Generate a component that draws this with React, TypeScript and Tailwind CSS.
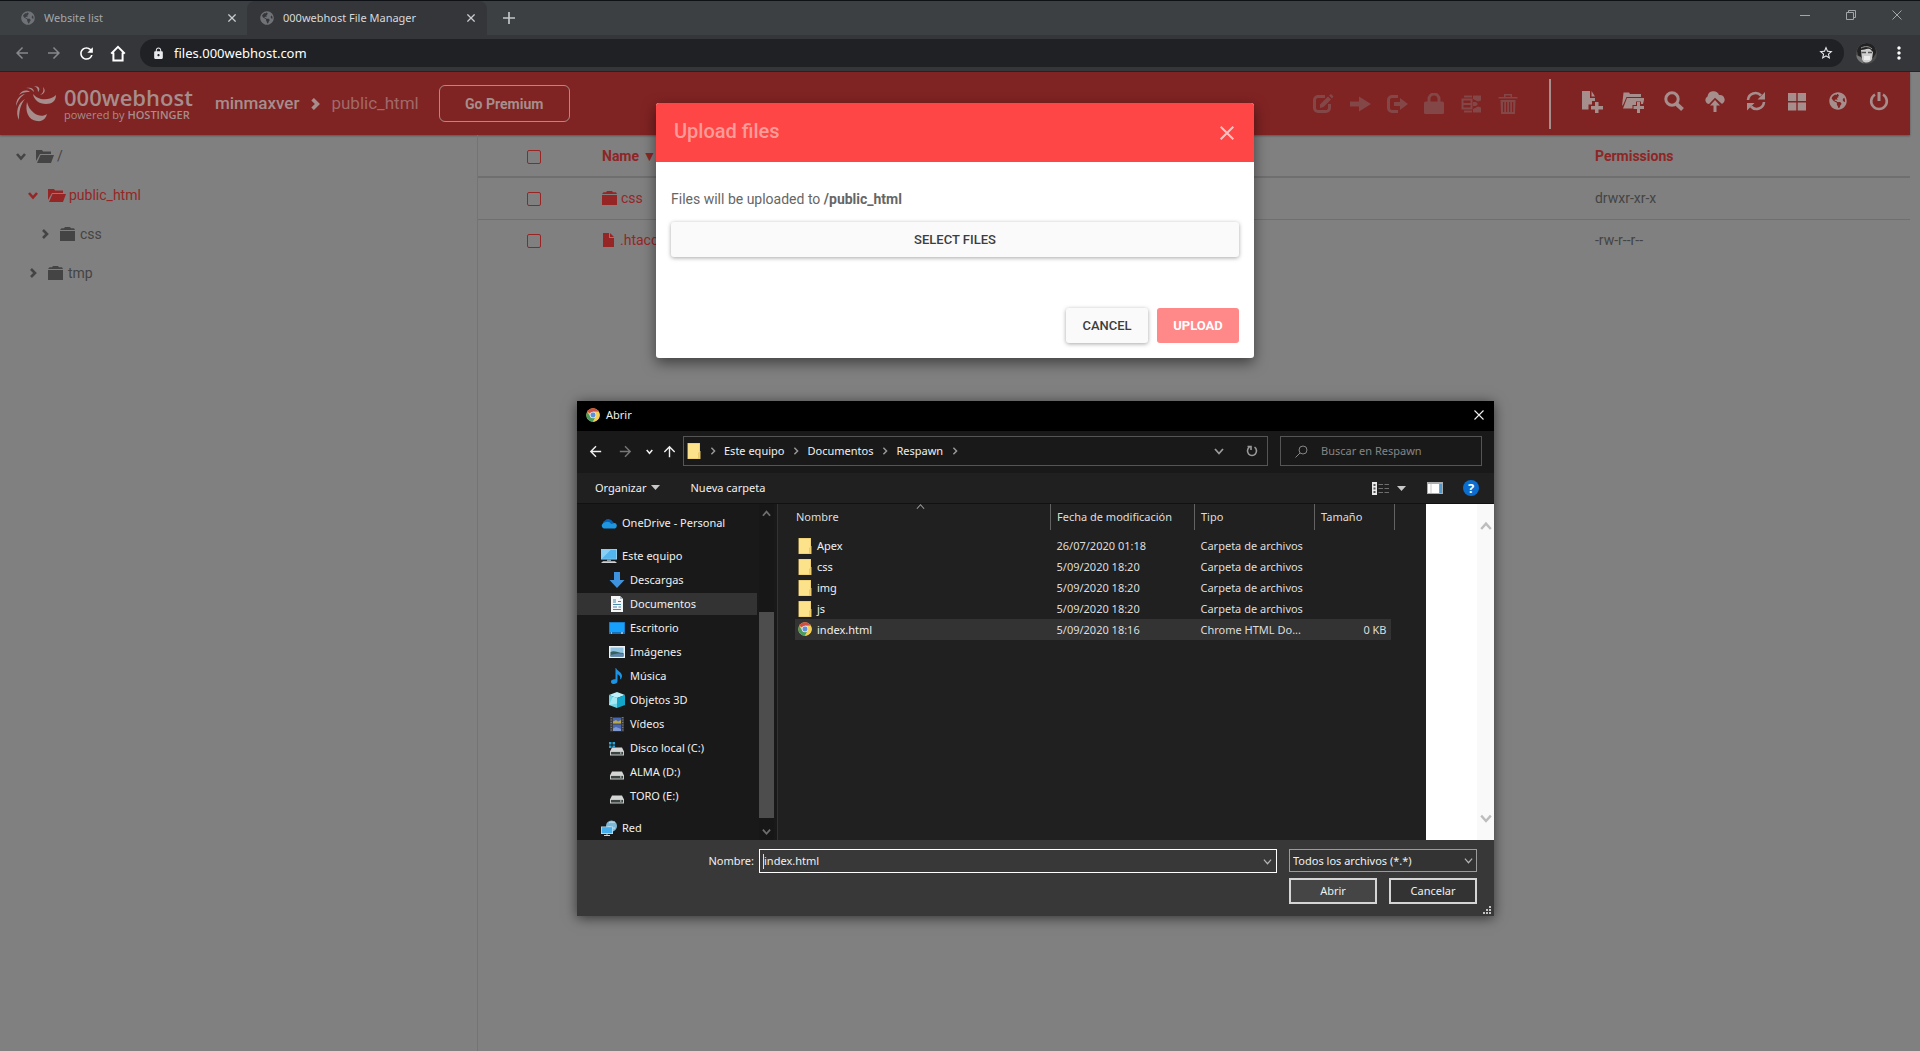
import type { ReactNode } from "react";
import { FaGlobeAmericas } from "react-icons/fa";
import { MdArrowBack, MdArrowForward, MdLock, MdMoreVert, MdRefresh, MdStarBorder } from "react-icons/md";

const SEGOE = "font-['Noto_Sans','Open_Sans',sans-serif]";
const ROBOTO = "font-['Roboto',sans-serif]";

/* ---------- shared glyphs ---------- */

function Chevron({ dir, size = 10, width = 2 }: { dir: "up" | "down" | "right"; size?: number; width?: number }) {
  const d = { up: "M1 7.5 5 3l4 4.5", down: "M1 3l4 4.5L9 3", right: "M3 1l4 4-4 4" }[dir];
  return (
    <svg width={size} height={size} viewBox="0 0 10 10" fill="none" stroke="currentColor" strokeWidth={width} className="shrink-0">
      <path d={d} />
    </svg>
  );
}

function Cross({ size = 10, width = 1 }: { size?: number; width?: number }) {
  return (
    <svg width={size} height={size} viewBox="0 0 10 10" fill="none" stroke="currentColor" strokeWidth={width} className="shrink-0">
      <path d="M.5.5l9 9M9.5.5l-9 9" />
    </svg>
  );
}

function ChromeLogo() {
  return (
    <svg width="14" height="14" viewBox="0 0 48 48" className="shrink-0">
      <circle cx="24" cy="24" r="23" fill="#f6cf58" />
      <path d="M24 24 4.1 12.5A23 23 0 0 1 43.9 12.5L24 13z" fill="#cf4f46" />
      <path d="M24 24 14.4 29.5 4.1 12.5A23 23 0 0 0 24 47L33.5 29.5z" fill="#4b9a5e" />
      <path d="M24 13H44.2A23 23 0 0 1 24 47L33.8 29.5z" fill="#f6cf58" />
      <circle cx="24" cy="24" r="11" fill="#dfe5ef" />
      <circle cx="24" cy="24" r="8.5" fill="#5b8edb" />
    </svg>
  );
}

function FolderTile() {
  return (
    <svg width="14" height="16" viewBox="0 0 14 16" className="shrink-0">
      <path d="M.5 0H13v8h.5v8H.5z" fill="#e3c466" />
      <path d="M1 .5h11.5V9L11 10v5.5H1z" fill="#fde28c" />
      <path d="M11.5 10 13 9v6.5h-1.5z" fill="#f3d06d" />
    </svg>
  );
}

/* ---------- browser chrome ---------- */

function Tab({ title, active }: { title: string; active?: boolean }) {
  return (
    <div
      className={
        active
          ? "flex w-60 items-center rounded-t-lg bg-[#35363a] pl-[13px] pr-[10px] text-[#d8d9da]"
          : "flex w-[247px] items-center pl-[21px] pr-[9px] text-[#a4a7aa]"
      }
    >
      <FaGlobeAmericas size={14} className="mr-[9px] shrink-0 text-[#6f7276]" />
      <span className="flex-1 truncate">{title}</span>
      <button aria-label={"Close " + title} className="p-0.5 text-[#c9cbcd]">
        <Cross size={8} width={1.6} />
      </button>
    </div>
  );
}

function BrowserBar() {
  return (
    <header className={SEGOE}>
      <div className="flex h-[35px] border-t border-[#0e1116] bg-[#3c4043] text-[11px]">
        <Tab title="Website list" />
        <Tab title="000webhost File Manager" active />
        <button aria-label="New tab" className="ml-4 text-[#c3c5c7]">
          <svg width="12" height="12" viewBox="0 0 12 12" stroke="currentColor" strokeWidth="1.7">
            <path d="M6 0v12M0 6h12" />
          </svg>
        </button>
        <div className="ml-auto flex items-start gap-9 pt-[9px] pr-[18px] text-[#a3a6a8]">
          <button aria-label="Minimize">
            <svg width="10" height="10" viewBox="0 0 10 10" stroke="currentColor"><path d="M0 5.5h10" /></svg>
          </button>
          <button aria-label="Restore">
            <svg width="10" height="10" viewBox="0 0 10 10" fill="none" stroke="currentColor"><path d="M.5 2.5h7v7h-7zM2.5 2.5v-2h7v7h-2" /></svg>
          </button>
          <button aria-label="Close window"><Cross /></button>
        </div>
      </div>
      <div className="flex h-9 items-center bg-[#35363a] pl-[13px] pr-[11px]">
        <nav className="flex items-center gap-[14px] text-white">
          <button aria-label="Back" className="text-[#86888a]"><MdArrowBack size={18} /></button>
          <button aria-label="Forward" className="text-[#86888a]"><MdArrowForward size={18} /></button>
          <button aria-label="Reload"><MdRefresh size={19} /></button>
          <button aria-label="Home">
            <svg width="16" height="17" viewBox="0 0 16 17" fill="none" stroke="currentColor" strokeWidth="2">
              <path d="M1.2 8.6 8 1.8l6.8 6.8M3.4 7.5v8h9.2v-8" />
            </svg>
          </button>
        </nav>
        <div className="ml-[14px] flex h-7 flex-1 items-center rounded-full bg-[#202124] pl-3 pr-[10px] text-[#e8eaed]">
          <MdLock size={13} />
          <input aria-label="Address" defaultValue="files.000webhost.com" className="ml-[9px] flex-1 bg-transparent pt-0.5 text-[13px] text-white outline-none" />
          <button aria-label="Bookmark"><MdStarBorder size={16} /></button>
        </div>
        <button aria-label="Profile" className="ml-3">
          <svg width="21" height="21" viewBox="0 0 21 21">
            <defs><clipPath id="av"><circle cx="10.5" cy="10.5" r="10.5" /></clipPath></defs>
            <g clipPath="url(#av)">
              <path d="M0 0h21v21H0z" fill="#4c4c4c" />
              <path d="M1 8C2 2 7 0 12 0s8 4 8 10l-3 5H3z" fill="#222" />
              <path d="M5 7c4 0 5-2 9-1l3 3-1 7c-1 4-8 5-10 1z" fill="#cfcfcf" />
              <path d="M5.500 9.500h4.500M12 9.500h4" stroke="#555" strokeWidth="1.400" />
              <path d="M0 12l5 2 3 7H0z" fill="#777" />
              <path d="M8 13h6v4H8z" fill="#ececec" />
              <path d="M5 5c4-2 8-2 11 1" stroke="#999" strokeWidth="1" fill="none" />
            </g>
          </svg>
        </button>
        <button aria-label="Menu" className="ml-3 text-white"><MdMoreVert size={20} /></button>
      </div>
    </header>
  );
}

/* ---------- file manager header ---------- */

function HostLogo() {
  return (
    <svg width="42" height="36" viewBox="0 0 42 36" fill="currentColor" className="shrink-0">
      <path d="M18 8C19 14 24 18 31 18c6 0 10-3 10-9-4 4-10 5-15 4-4-1-6-3-8-5z" />
      <path d="M12 16c-2 9 1 18 10 19 6 1 9-3 10-7-4 3-9 2-13-1-4-3-6-7-7-11z" />
      <path d="M10 13C3 17 0 26 4 34 4 26 5 19 10 13z" />
      <path d="M10 8C4 9 1 14 1 20 3 15 5 11 10 8z" />
      <path d="M15 6C11 3 6 5 4 9c4-3 7-3 11-3z" />
      <path d="M19 6c0-4-4-5-8-4 4 0 6 2 8 4z" />
      <path d="M23 6c3-3 1-6-4-6 3 1 4 3 4 6z" />
      <path d="M25 9c5-1 6-5 3-8 1 4 0 6-3 8z" />
    </svg>
  );
}

function Glyph({ children }: { children: ReactNode }) {
  return (
    <svg width="22" height="22" viewBox="0 0 22 22" fill="currentColor" className="shrink-0">
      {children}
    </svg>
  );
}

const fileActions: { label: string; icon: ReactNode }[] = [
  {
    label: "Edit",
    icon: (
      <>
        <path d="M13 3.500H6A3.500 3.500 0 0 0 2.500 7v8A3.500 3.500 0 0 0 6 18.500h8a3.500 3.500 0 0 0 3.500-3.500v-4" fill="none" stroke="currentColor" strokeWidth="3" />
        <path d="M8 15V11.500L16 3.500 19 6.500 11.500 14zM17 2.500l2-1.500 2.500 2.500-1.500 2z" />
      </>
    ),
  },
  { label: "Move", icon: <path d="M1 8.500h9V3.500L22 11l-12 7.500v-5H1z" /> },
  {
    label: "Copy",
    icon: (
      <>
        <path d="M12 3.500H6A3.500 3.500 0 0 0 2.500 7v8A3.500 3.500 0 0 0 6 18.500h6" fill="none" stroke="currentColor" strokeWidth="3" />
        <path d="M8 9h6V5l8 6-8 6v-4H8z" />
      </>
    ),
  },
  {
    label: "Permissions",
    icon: (
      <>
        <path d="M6 10V6a5 5 0 0 1 10 0v4" fill="none" stroke="currentColor" strokeWidth="3" />
        <rect x="1" y="8.500" width="20" height="12.500" rx="1.500" />
      </>
    ),
  },
  {
    label: "Archive",
    icon: (
      <>
        <path d="M4 3.500h8M4 18.500h8M2.500 6.500h9v9h-9zM2 11h9" fill="none" stroke="currentColor" strokeWidth="2" />
        <path d="M13 2.500h8v5l-3 1-5-2.500zM13 9h3l2 2-2 2h-3zM13 16l5-2.500 3 1v5h-8z" />
      </>
    ),
  },
  {
    label: "Delete",
    icon: (
      <>
        <path d="M1.500 4h19v1.500h-19zM7 4V1h8v3h-1.500V2.500h-5V4z" />
        <path d="M3.500 7h15L18 21H4zM6 9v10h1.200V9zm3 0v10h1.200V9zm3 0v10h1.200V9zm3 0v10h1.200V9z" fillRule="evenodd" />
      </>
    ),
  },
];

const pageActions: { label: string; icon: ReactNode }[] = [
  { label: "New file", icon: <path d="M1 0h8v7h5v3h-3v3.500H7.500v5H1zM10.500 0 14 5.500h-3.500zM14 11h3.500v4H22v3.500h-4.500V22H14v-3.500h-4V15h4z" /> },
  { label: "New folder", icon: <path d="M0 15 1.500 1.500H7L8 3h11v3H4.500L1.500 13zM5 7h17.500l-1.500 6H19v-2.500h-5V14h-3.500v3.500H1zM15 11h3v4h4v3h-4v4h-3v-4h-3.500v-3H15z" /> },
  {
    label: "Search",
    icon: (
      <>
        <circle cx="9" cy="8" r="6.200" fill="none" stroke="currentColor" strokeWidth="3" />
        <path d="m13 12.500 6.500 6" stroke="currentColor" strokeWidth="4" />
      </>
    ),
  },
  { label: "Upload", icon: <path d="M5 13A4 4 0 0 1 3.500 5.500 6 6 0 0 1 15 4a4.800 4.800 0 0 1 3 9L11 6.800zM11 9l5 5.500h-3.500V21h-3v-6.500H6z" /> },
  {
    label: "Refresh",
    icon: (
      <>
        <path d="M3 9A7.500 7.500 0 0 1 16 4.500M19 11a7.500 7.500 0 0 1-13 4.500" fill="none" stroke="currentColor" strokeWidth="2.600" />
        <path d="M20 1v7.500h-7.500zM2 19.500V12h7.500z" />
      </>
    ),
  },
  { label: "Grid view", icon: <path d="M2 2h8.300v8H2zM11.700 2H20v8h-8.300zM2 11.500h8.300v8H2zM11.700 11.500H20v8h-8.300z" /> },
  { label: "Language", icon: <FaGlobeAmericas size={18} x={2} y={1} /> },
  {
    label: "Log out",
    icon: (
      <>
        <path d="M7 3.500a7.800 7.800 0 1 0 8 0" fill="none" stroke="currentColor" strokeWidth="2.600" />
        <path d="M9.500 1h3v9h-3z" />
      </>
    ),
  },
];

function SiteHeader() {
  return (
    <div className="flex h-[63px] items-center bg-[#802323] pl-[15px] pr-5 text-[#a58e8c] shadow-[0_1px_2px_rgba(0,0,0,0.35)]">
      <a href="#home" className="flex items-center gap-[7px] font-['Open_Sans',sans-serif]">
        <HostLogo />
        <span className="flex flex-col">
          <span className="text-[22px] leading-[22px] font-semibold">000webhost</span>
          <span className="text-[11px] leading-[14px]">powered by <span className="font-semibold">HOSTINGER</span></span>
        </span>
      </a>
      <nav className="ml-[22px] flex items-center gap-[10px] text-[17px] font-medium">
        <a href="#root">minmaxver</a>
        <Chevron dir="right" size={12} width={3} />
        <a href="#public_html" className="font-normal text-[#a06a69]">public_html</a>
      </nav>
      <button className="ml-5 h-[37px] w-[131px] rounded-md border border-[#a58e8c] text-sm font-bold">Go Premium</button>
      <div className="ml-auto flex items-center gap-[15px] text-[#844748]">
        {fileActions.map((a) => (
          <button key={a.label} aria-label={a.label} disabled><Glyph>{a.icon}</Glyph></button>
        ))}
      </div>
      <div className="mx-[30px] h-[50px] w-0.5 bg-[#a58e8c]" />
      <div className="flex items-center gap-[19px] pb-1">
        {pageActions.map((a) => (
          <button key={a.label} aria-label={a.label}><Glyph>{a.icon}</Glyph></button>
        ))}
      </div>
    </div>
  );
}

/* ---------- tree and listing ---------- */

function OpenFolder() {
  return (
    <svg width="18" height="14" viewBox="0 0 18 14" fill="currentColor" className="shrink-0">
      <path d="M0 12V1h6l1 1.500h8V5H4zM4.500 6H18l-3 8H1z" />
    </svg>
  );
}

function ClosedFolder() {
  return (
    <svg width="15" height="14" viewBox="0 0 15 14" fill="currentColor" className="shrink-0">
      <path d="M0 3 1.500 1.200H4L5 0h5l1 1.200h3L15 3zM0 4h15v10H0z" />
    </svg>
  );
}

const tree = [
  { name: "/", open: true, className: "pl-4" },
  { name: "public_html", open: true, className: "pl-7 text-[#962626]" },
  { name: "css", open: false, className: "pl-10" },
  { name: "tmp", open: false, className: "pl-7" },
];

function Tree() {
  return (
    <aside className="w-[478px] shrink-0 border-r border-[#747474]">
      <ul className="pt-px">
        {tree.map((n) => (
          <li key={n.name} className={"flex h-[39px] items-center " + n.className}>
            <Chevron dir={n.open ? "down" : "right"} size={10} width={2.6} />
            <a href={"#" + n.name} className={n.open ? "ml-[10px] flex items-center gap-[3px]" : "ml-[10px] flex items-center gap-[5px]"}>
              {n.open ? <OpenFolder /> : <ClosedFolder />}
              {n.name}
            </a>
          </li>
        ))}
      </ul>
    </aside>
  );
}

const box = "mt-0.5 block size-[14px] appearance-none rounded-[2px] border border-[#992424]";

function Listing() {
  return (
    <div className="flex-1">
      <table className="w-full table-fixed text-left">
        <colgroup>
          <col className="w-[124px]" />
          <col />
          <col className="w-[22%]" />
        </colgroup>
        <thead className="text-[#8e2626]">
          <tr className="h-[42px] border-b-2 border-[#6f6f6f]">
            <th className="pl-[49px]"><input type="checkbox" aria-label="Select all" className={box} /></th>
            <th className="font-bold">Name ▼</th>
            <th className="font-bold">Permissions</th>
          </tr>
        </thead>
        <tbody>
          <tr className="h-[42px] border-b border-[#6f6f6f]">
            <td className="pl-[49px]"><input type="checkbox" aria-label="css" className={box} /></td>
            <td><a href="#css" className="flex items-center gap-1 text-[#962626]"><ClosedFolder />css</a></td>
            <td>drwxr-xr-x</td>
          </tr>
          <tr className="h-[42px]">
            <td className="pl-[49px]"><input type="checkbox" aria-label=".htaccess" className={box} /></td>
            <td>
              <a href="#htaccess" className="flex items-center gap-[6px] text-[#962626]">
                <svg width="12" height="14" viewBox="0 0 12 14" fill="currentColor"><path d="M1 0h6v5h5v9H1zM8 0l4 4H8z" /></svg>
                .htaccess
              </a>
            </td>
            <td>-rw-r--r--</td>
          </tr>
        </tbody>
      </table>
    </div>
  );
}

function UploadModal() {
  const raised = "h-[35px] rounded-[3px] bg-[#fafafa] pt-0.5 text-[#3d3d3d] shadow-[0_1px_4px_rgba(0,0,0,0.35)]";
  return (
    <section role="dialog" aria-label="Upload files" className="absolute inset-x-0 top-[31px] mx-auto w-[598px] overflow-hidden rounded-[3px] bg-white text-[#666] shadow-[0_5px_14px_rgba(0,0,0,0.5)]">
      <div className="flex h-[59px] items-center justify-between bg-[#ff4646] pl-[18px] pr-5 text-[#ff9c98]">
        <h2 className="pb-1 text-xl font-medium">Upload files</h2>
        <button aria-label="Close" className="text-[#ffc4c2]"><Cross size={14} width={1.4} /></button>
      </div>
      <div className="px-[15px] pt-[27px] pb-[15px]">
        <p className="leading-5">Files will be uploaded to <strong className="font-bold">/public_html</strong></p>
        <button className={"mt-[13px] w-full text-[13px] font-medium " + raised}>SELECT FILES</button>
        <div className="mt-[51px] flex justify-end gap-[9px] text-[13px] font-medium">
          <button className={"w-[82px] " + raised}>CANCEL</button>
          <button disabled className="h-[35px] w-[82px] rounded-[3px] bg-[#ff8889] pt-0.5 font-bold text-white">UPLOAD</button>
        </div>
      </div>
    </section>
  );
}

/* ---------- open-file window ---------- */

function Icon16({ children }: { children: ReactNode }) {
  return <svg width="16" height="16" viewBox="0 0 16 16" className="shrink-0">{children}</svg>;
}

function DriveBody() {
  return (
    <>
      <path d="M3 7.500h10l2 4H1z" fill="#d4d6d6" />
      <path d="M1 11h14v4.500H1z" fill="#c7caca" />
      <path d="M2 12h12v2.500H2z" fill="#3c4442" />
      <path d="M11 13h1.500" stroke="#d9f5e5" />
    </>
  );
}

const places: { name: string; className: string; icon: ReactNode }[] = [
  {
    name: "OneDrive - Personal",
    className: "mb-[9px] pl-6",
    icon: (
      <>
        <path d="M4 12a3.500 3.500 0 0 1 0-6.500A5 5 0 0 1 12 7l4 4z" fill="#0a5fb0" />
        <path d="M1 9.500C4 6 9 6 10 9l4-1a3 3 0 0 1 0 5.500H3A3 3 0 0 1 1 9.500z" fill="#1f96e0" />
      </>
    ),
  },
  {
    name: "Este equipo",
    className: "pl-6",
    icon: (
      <>
        <path d="M0 1h16v10.500H0z" fill="#9fd4f3" />
        <path d="M.8 1.800h14.400v9H.8z" fill="#53b5ee" />
        <path d="M.8 10.800V1.800h9z" fill="#8ad0f6" />
        <path d="M6 11.500h4v1.500H6z" fill="#8f9aa0" />
        <path d="M0 15l2-1.800h12L16 15z" fill="#cfd3d5" />
      </>
    ),
  },
  { name: "Descargas", className: "pl-8", icon: <path d="M5 0h6v8h4.500L8 16 .5 8H5z" fill="#3f92de" /> },
  {
    name: "Documentos",
    className: "pl-8 bg-[#333333]",
    icon: (
      <>
        <path d="M2 0h9l3 3v13H2z" fill="#f4f6f8" />
        <path d="M11 0v3h3z" fill="#aeb6bd" />
        <path d="M4 4h3M4 6h3M4 8.500h8M4 11h4M9.500 11H12M4 13.500h8M9 5.500h3" stroke="#4b86ab" strokeWidth="1.200" />
      </>
    ),
  },
  {
    name: "Escritorio",
    className: "pl-8",
    icon: (
      <>
        <path d="M0 2h16v12H0z" fill="#1a6fb5" />
        <path d="M.7 2.700h14.600V12H.7z" fill="#16a0fb" />
        <path d="M2 13h1M12 13h2" stroke="#fff" />
      </>
    ),
  },
  {
    name: "Imágenes",
    className: "pl-8",
    icon: (
      <>
        <path d="M0 2h16v12H0z" fill="#eef1f3" />
        <path d="M1.500 3.500h13v9h-13z" fill="#8fc3e0" />
        <path d="M1.500 8c4-2 7 1 13 1v3.500h-13z" fill="#36605b" />
        <path d="M1.500 11c5-1 8-2 13-1v2.500h-13z" fill="#5c86b0" />
      </>
    ),
  },
  { name: "Música", className: "pl-8", icon: <path d="M7 0c1 3 6 4 6 8 0 2-1 3-2 3.500.8-3-.5-4.500-2.500-5.200V13c0 2-2 3-4 3S2 15 2 13.500 4 11 6.500 11.300V0z" fill="#1c94e6" /> },
  {
    name: "Objetos 3D",
    className: "pl-8",
    icon: (
      <>
        <path d="M8 0l8 3-8 3-8-3z" fill="#bdf0f8" />
        <path d="M0 3l8 3v10l-8-3z" fill="#6fd6e8" />
        <path d="M16 3 8 6v10l8-3z" fill="#12a6cb" />
        <path d="M4 4.500 8 6v5.500L0 13z" fill="#a4e8f3" />
      </>
    ),
  },
  {
    name: "Vídeos",
    className: "pl-8",
    icon: (
      <>
        <path d="M1 1h14v14.500H1z" fill="#3c3c40" />
        <path d="M2.200 1v14M13.800 1v14" stroke="#8d8d92" strokeDasharray="1 1.500" />
        <path d="M4 2h8v5.500H4zM4 8.500h8V15H4z" fill="#4668b4" />
        <path d="M4 5.500 7 4l2 1.500 3-1.500v3.500H4z" fill="#b9a64a" />
        <path d="M4 12.500 7 11l5 2v2H4z" fill="#7e97cf" />
      </>
    ),
  },
  {
    name: "Disco local (C:)",
    className: "pl-8",
    icon: (
      <>
        <DriveBody />
        <path d="M0 2h2.500v2.500H0zM3.500 2H6v2.500H3.500zM0 5.500h2.500V8H0zM3.500 5.500H6V8H3.500z" fill="#2ba3d4" />
      </>
    ),
  },
  { name: "ALMA (D:)", className: "pl-8", icon: <DriveBody /> },
  { name: "TORO (E:)", className: "mb-2 pl-8", icon: <DriveBody /> },
  {
    name: "Red",
    className: "pl-6",
    icon: (
      <>
        <circle cx="10.500" cy="6" r="5.500" fill="#7db9d6" />
        <path d="M8 3c2-2 4 0 6-1M7 7c3-1 4 2 7 1" stroke="#c9e6f2" fill="none" />
        <path d="M0 6.500h12V14H0z" fill="#bfe2f6" />
        <path d="M.8 7.200h10.400v6H.8z" fill="#46aeea" />
        <path d="M3 15.500h6M6 14v1.500" stroke="#cfd8dc" />
      </>
    ),
  },
];

const files = [
  { name: "Apex", date: "26/07/2020 01:18", type: "Carpeta de archivos", size: "" },
  { name: "css", date: "5/09/2020 18:20", type: "Carpeta de archivos", size: "" },
  { name: "img", date: "5/09/2020 18:20", type: "Carpeta de archivos", size: "" },
  { name: "js", date: "5/09/2020 18:20", type: "Carpeta de archivos", size: "" },
  { name: "index.html", date: "5/09/2020 18:16", type: "Chrome HTML Do...", size: "0 KB" },
];

function Crumb({ children }: { children?: ReactNode }) {
  return (
    <>
      <span className="flex w-[23px] justify-center text-[#9a9a9a]"><Chevron dir="right" size={8} width={1.8} /></span>
      {children && <button>{children}</button>}
    </>
  );
}

function Triangle() {
  return <svg width="9" height="5" viewBox="0 0 9 5" fill="currentColor"><path d="M0 0h9L4.500 5z" /></svg>;
}

function OpenDialog() {
  const heading = "border-r border-[#636363] pl-[6px] font-normal";
  return (
    <section role="dialog" aria-label="Abrir" className={"absolute top-[329px] left-[577px] w-[917px] bg-[#191919] text-[11px] text-[#f0f0f0] shadow-[0_2px_12px_rgba(0,0,0,0.6)] " + SEGOE}>
      <div className="flex h-[30px] items-center bg-black pr-[10px] pb-0.5 pl-[9px]">
        <ChromeLogo />
        <h2 className="ml-[6px] flex-1">Abrir</h2>
        <button aria-label="Cerrar"><Cross size={10} width={1.1} /></button>
      </div>

      <div className="flex h-[42px] items-center pr-3 pl-[10px] pb-0.5">
        <button aria-label="Atrás"><MdArrowBack size={17} /></button>
        <button aria-label="Adelante" className="ml-[13px] text-[#777]"><MdArrowForward size={17} /></button>
        <button aria-label="Recientes" className="ml-3"><Chevron dir="down" size={7} width={2.2} /></button>
        <button aria-label="Subir" className="ml-2"><MdArrowBack size={17} className="rotate-90" /></button>
        <div className="ml-[5px] flex h-[30px] flex-1 items-center border border-[#555] pl-[3px]">
          <FolderTile />
          <Crumb>Este equipo</Crumb>
          <Crumb>Documentos</Crumb>
          <Crumb>Respawn</Crumb>
          <Crumb />
          <button aria-label="Ubicaciones anteriores" className="ml-auto text-[#9a9a9a]"><Chevron dir="down" size={10} width={1.8} /></button>
          <button aria-label="Actualizar" className="mr-2 ml-[21px] text-[#9a9a9a]">
            <svg width="14" height="14" viewBox="0 0 14 14" fill="none" stroke="currentColor" strokeWidth="1.600">
              <path d="M9.500 3.200a4.500 4.500 0 1 1-5 0M2.500 2.500H6V6" />
            </svg>
          </button>
        </div>
        <label className="ml-3 flex h-[30px] w-[202px] items-center border border-[#555] pl-[14px] text-[#858585]">
          <svg width="13" height="13" viewBox="0 0 13 13" fill="none" stroke="currentColor"><circle cx="8" cy="5" r="4" /><path d="M5 8 .5 12.500" /></svg>
          <input placeholder="Buscar en Respawn" aria-label="Buscar en Respawn" className="ml-[13px] min-w-0 flex-1 bg-transparent outline-none placeholder:text-[#858585]" />
        </label>
      </div>

      <div className="flex h-[31px] items-center border-b border-[#111] bg-[#202020] pr-[15px] pl-[18px]">
        <button className="flex items-center gap-[5px]">Organizar <span className="text-[#c8c8c8]"><Triangle /></span></button>
        <button className="ml-[30px]">Nueva carpeta</button>
        <button aria-label="Cambiar vista" className="ml-auto flex items-center gap-2 text-[#c8c8c8]">
          <svg width="17" height="13" viewBox="0 0 17 13">
            <path d="M0 0h5v13H0z" fill="#e8e8e8" />
            <path d="M1.500 2h2v2h-2zM1.500 5.500h2v2h-2zM1.500 9h2v2h-2z" fill="#555" />
            <path d="M6.500 2.500H11m1.500 0H17M6.500 6.500H11m1.500 0H17M6.500 10.500H11m1.500 0H17" stroke="#6f6f6f" />
          </svg>
          <Triangle />
        </button>
        <button aria-label="Panel de vista previa" className="ml-[21px]">
          <svg width="16" height="12" viewBox="0 0 16 12">
            <path d="M0 0h16v12H0z" fill="#a9adb0" />
            <path d="M1 2h11v9H1z" fill="#fff" />
            <path d="M4 2v9" stroke="#c9c9c9" />
            <path d="M12.500 2H15v9h-2.500z" fill="#4d9bd0" />
          </svg>
        </button>
        <button aria-label="Ayuda" className="ml-5 size-4 rounded-full bg-[#0a6ed1] text-[13px] leading-4 font-bold text-white">?</button>
      </div>

      <div className="flex h-[336px]">
        <ul className="w-[180px] overflow-hidden pt-[7px]">
          {places.map((p) => (
            <li key={p.name} className={"flex h-6 items-center border-y border-[#191919] bg-clip-padding " + p.className}>
              <Icon16>{p.icon}</Icon16>
              <span className="ml-[5px] whitespace-nowrap">{p.name}</span>
            </li>
          ))}
        </ul>
        <div className="ml-0.5 flex w-[15px] flex-col items-center bg-[#171717] text-[#6e6e6e]">
          <span className="flex h-[108px] pt-[5px]"><Chevron dir="up" size={9} width={2} /></span>
          <span className="w-full flex-1 bg-[#4d4d4d]" />
          <span className="flex h-[22px] items-center pt-1"><Chevron dir="down" size={9} width={2} /></span>
        </div>
        <div className="relative ml-[3px] flex-1 border-l border-[#333] bg-[#202020]">
          <span className="absolute -top-0.5 left-[138px] text-[#9a9a9a]"><Chevron dir="up" size={9} width={1.2} /></span>
          <table className="ml-[17px] w-[600px] table-fixed text-left text-[#dedede]">
            <colgroup>
              <col />
              <col className="w-36" />
              <col className="w-[120px]" />
              <col className="w-20" />
            </colgroup>
            <thead>
              <tr className="h-[26px]">
                <th className="border-r border-[#636363] pl-px font-normal">Nombre</th>
                <th className={heading}>Fecha de modificación</th>
                <th className={heading}>Tipo</th>
                <th className={heading}>Tamaño</th>
              </tr>
              <tr className="h-[5px]" />
            </thead>
            <tbody>
              {files.map((f) => (
                <tr key={f.name} className={f.size ? "h-[21px] bg-[linear-gradient(to_right,#333_596px,transparent_596px)]" : "h-[21px]"}>
                  <td className="pl-[3px] text-[#f0f0f0]">
                    <span className="flex items-center gap-[5px]">{f.size ? <ChromeLogo /> : <FolderTile />}{f.name}</span>
                  </td>
                  <td className="pl-[6px]">{f.date}</td>
                  <td className="pl-[6px]">{f.type}</td>
                  <td className="pr-2 text-right">{f.size}</td>
                </tr>
              ))}
            </tbody>
          </table>
        </div>
        <div className="flex w-[68px] justify-end bg-white text-[#bdbdbd]">
          <div className="flex w-[17px] flex-col items-center justify-between bg-[#f9f9f9] pt-4 pb-4">
            <Chevron dir="up" size={12} width={2} />
            <Chevron dir="down" size={12} width={2} />
          </div>
        </div>
      </div>

      <div className="relative flex h-[76px] items-start bg-[#383838] pt-[9px] pr-[17px]">
        <label htmlFor="file-name" className="w-[177px] pt-1 text-right">Nombre:</label>
        <div className="ml-[5px] flex h-6 flex-1 items-center border border-white pr-1 pl-[3px]">
          <span className="h-[15px] w-px bg-[#e6e6a0]" />
          <input id="file-name" defaultValue="index.html" className="min-w-0 flex-1 bg-transparent outline-none" />
          <span className="text-[#b5b5b5]"><Chevron dir="down" size={9} width={1.3} /></span>
        </div>
        <div className="ml-3 w-[188px]">
          <div className="relative">
            <select aria-label="Tipo de archivo" className="h-[23px] w-full appearance-none border border-[#9b9b9b] bg-[#333] pl-[3px]">
              <option>Todos los archivos (*.*)</option>
            </select>
            <span className="pointer-events-none absolute top-[7px] right-1 text-[#b5b5b5]"><Chevron dir="down" size={9} width={1.3} /></span>
          </div>
          <div className="mt-1.5 flex justify-between">
            <button className="h-[26px] w-[88px] border-2 border-[#d5d5d5] bg-[#454545]">Abrir</button>
            <button className="h-[26px] w-[88px] border-2 border-[#d5d5d5] bg-[#333]">Cancelar</button>
          </div>
        </div>
        <svg width="8" height="8" viewBox="0 0 8 8" fill="#c4c4c4" className="absolute right-[3px] bottom-0.5">
          <path d="M6 0h2v2H6zM3 3h2v2H3zM6 3h2v2H6zM0 6h2v2H0zM3 6h2v2H3zM6 6h2v2H6z" />
        </svg>
      </div>
    </section>
  );
}

export default function App() {
  return (
    <div className="flex min-h-screen flex-col bg-[#808080]">
      <BrowserBar />
      <div className={"relative flex flex-1 flex-col border-t border-[#2b2124] text-sm text-[#444] " + ROBOTO}>
        <div className="relative mr-[10px] flex flex-1 flex-col">
          <SiteHeader />
          <div className="flex flex-1">
            <Tree />
            <Listing />
          </div>
          <UploadModal />
        </div>
        <OpenDialog />
      </div>
    </div>
  );
}
